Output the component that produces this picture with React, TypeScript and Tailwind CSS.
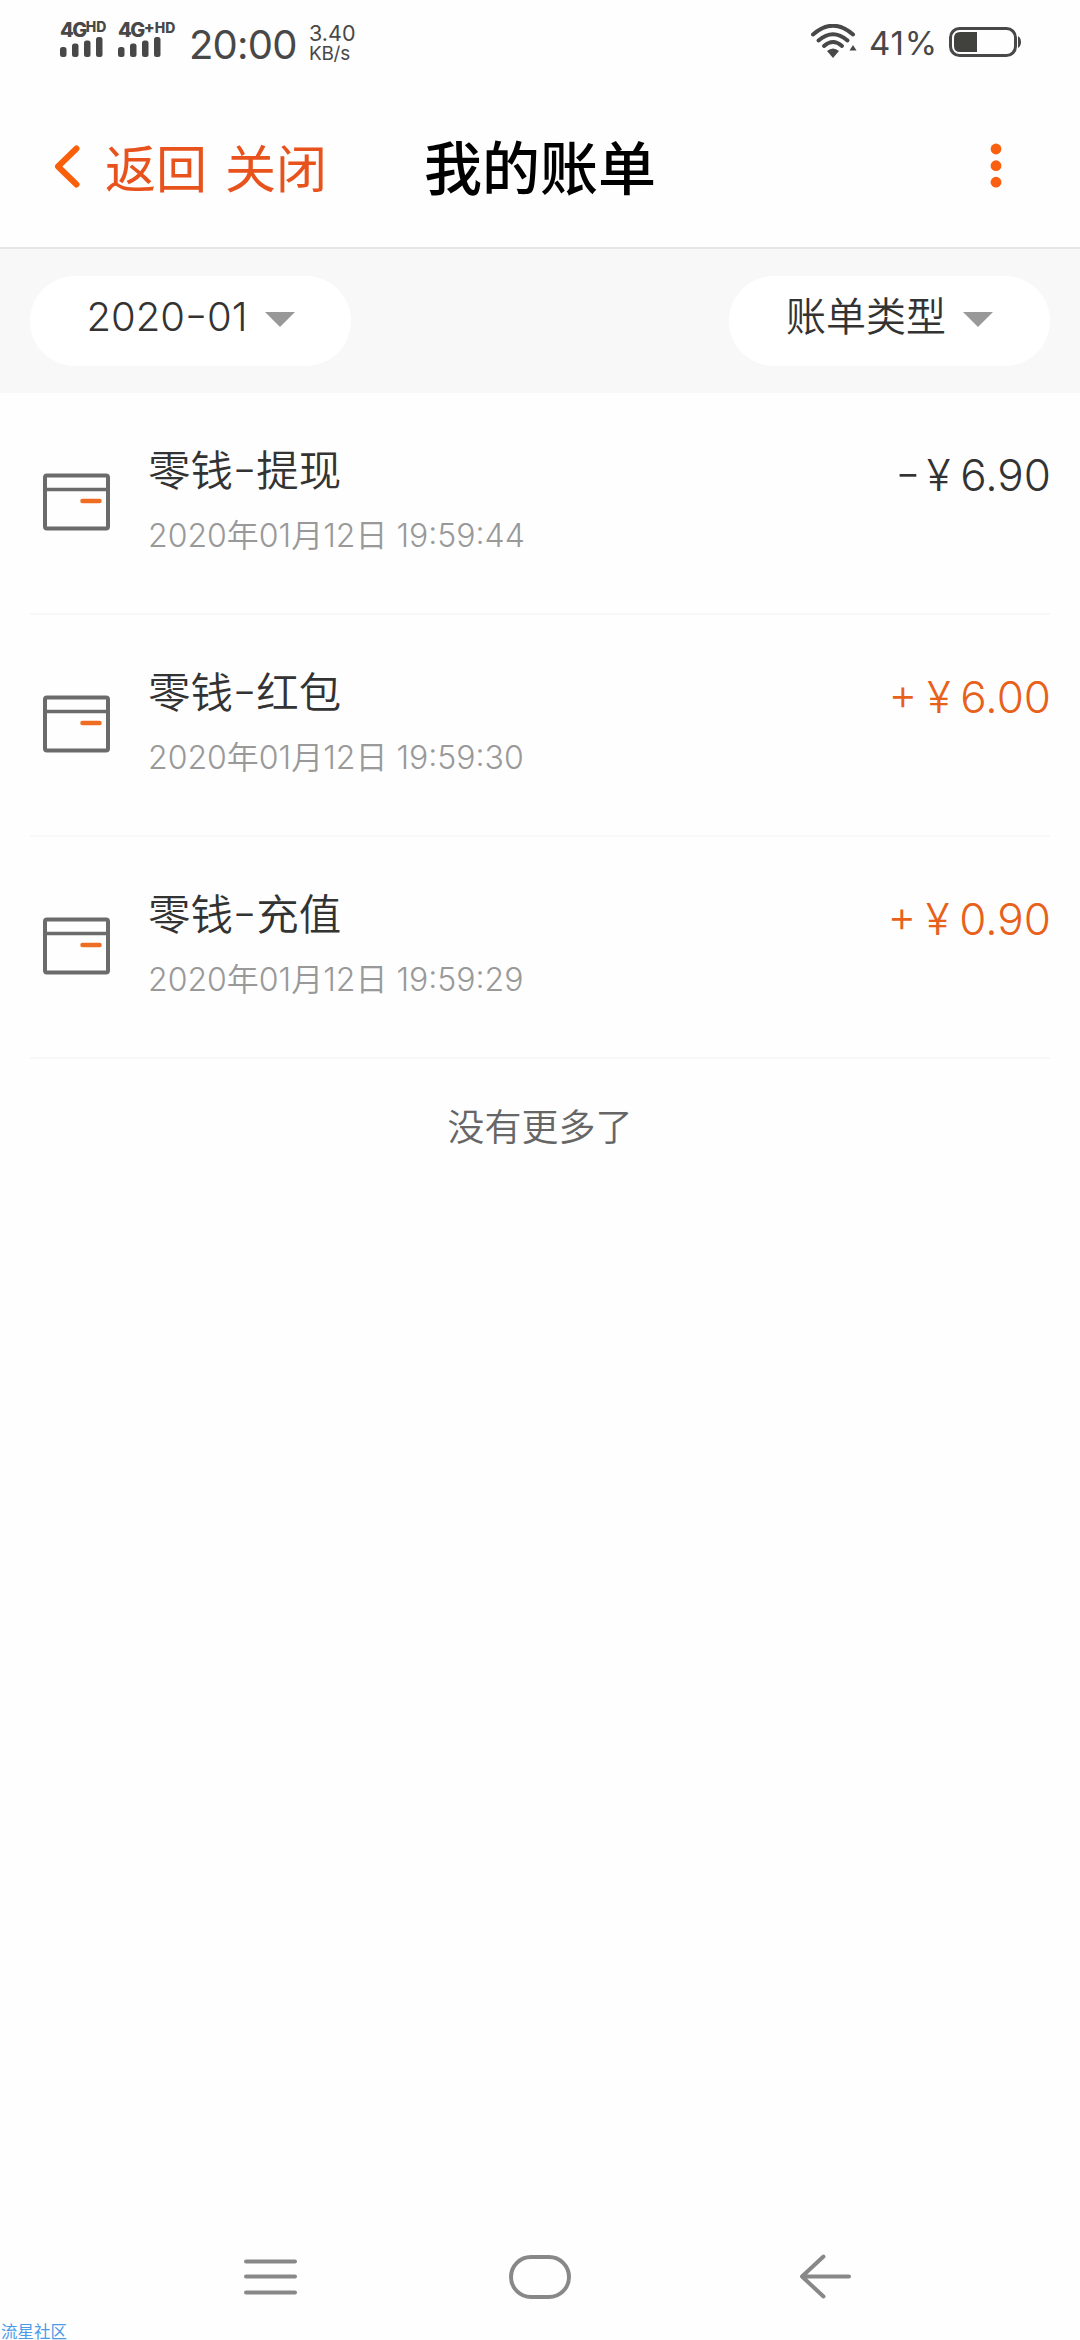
import type { ReactNode } from "react";

interface Bill {
  id: number;
  kind: string;
  time: string;
  amount: string;
  income: boolean;
}

const bills: Bill[] = [
  { id: 1, kind: "提现", time: "2020年01月12日 19:59:44", amount: "6.90", income: false },
  { id: 2, kind: "红包", time: "2020年01月12日 19:59:30", amount: "6.00", income: true },
  { id: 3, kind: "充值", time: "2020年01月12日 19:59:29", amount: "0.90", income: true },
];

const SignalBars = () => (
  <svg width="43" height="20" viewBox="0 0 43 20" fill="#484848" aria-hidden="true">
    <rect x="0" y="10" width="6.5" height="10" rx="2.5" />
    <rect x="12" y="6.5" width="6.5" height="13.5" rx="2.5" />
    <rect x="24" y="3.5" width="6.5" height="16.5" rx="2.5" />
    <rect x="36" y="0" width="6.5" height="20" rx="2.5" />
  </svg>
);

const StatusBar = () => (
  <div className="flex h-[84px] items-start text-[#484848]">
    {/* 双卡信号 */}
    <div className="ml-[60px] mt-[20px] w-[58px]">
      <div className="flex h-[17px] items-start whitespace-nowrap font-extrabold">
        <span className="text-[20px] leading-[21px] tracking-[-1.5px]">4G</span>
        <span className="text-[14px] leading-[14px]">HD</span>
      </div>
      <SignalBars />
    </div>
    <div className="mt-[20px] w-[71px]">
      <div className="flex h-[17px] items-start whitespace-nowrap font-extrabold">
        <span className="text-[20px] leading-[21px] tracking-[-1.5px]">4G</span>
        <span className="text-[14px] leading-[14px]">
          <span className="text-[16px]">+</span>HD
        </span>
      </div>
      <SignalBars />
    </div>
    <div className="mt-[25px] w-[120px] whitespace-nowrap text-[40px] leading-[40px] tracking-[-0.8px]">20:00</div>
    <div className="mt-[23px] flex flex-col whitespace-nowrap">
      <span className="text-[21.5px] leading-[21px]">3.40</span>
      <span className="text-[19px] leading-[19px] tracking-[-0.3px]">KB/s</span>
    </div>

    <div className="ml-auto mr-[59px] flex">
      <svg className="mt-[24px]" width="48" height="36" viewBox="0 0 48 36" fill="none" stroke="#484848" strokeWidth="4" strokeLinecap="round" aria-hidden="true">
        <path d="M2 10.5Q22 -7 42 10.5" />
        <path d="M7.500 16.500Q22 4 36.500 16.500" />
        <path d="M13 22Q22 14 31 22" />
        <path d="M16 27Q22 22 28 27L22 34Z" fill="#484848" stroke="none" />
        <path d="M42 21L45.500 26.500H38.500Z" fill="#484848" stroke="none" />
      </svg>
      <span className="ml-[10px] mt-[26px] w-[80px] whitespace-nowrap text-[33px] leading-[34px] tracking-[0.8px]">41%</span>
      <svg className="mt-[26px]" width="72" height="32" viewBox="0 0 72 32" aria-hidden="true">
        <rect x="1.500" y="2.500" width="65" height="27" rx="9" fill="none" stroke="#484848" strokeWidth="3" />
        <path d="M11 6H28V26H11Q5 26 5 20V12Q5 6 11 6Z" fill="#41413d" />
        <path d="M69 10Q72 12 72 16Q72 20 69 22Z" fill="#484848" />
      </svg>
    </div>
  </div>
);

const NavHeader = () => (
  <header className="grid h-[165px] grid-cols-3 items-start border-b-2 border-[#e6e6e6]">
    <div className="flex pl-[53px]">
      <svg className="mt-[60px]" width="28" height="44" viewBox="0 0 28 44" fill="none" stroke="#fa5f0a" strokeWidth="6" strokeLinecap="round" strokeLinejoin="round" aria-hidden="true">
        <path d="M23.500 4.500L5 22.500L23.500 40.500" />
      </svg>
      <div className="ml-[24px] mt-[51px] flex gap-[18px] whitespace-nowrap text-[51px] leading-[70px] text-[#e8521c]">
        <span>返回</span>
        <span>关闭</span>
      </div>
    </div>
    <h1 className="mt-[47px] whitespace-nowrap text-center text-[58px] font-medium leading-[76px] text-black">我的账单</h1>
    <svg className="mt-[57px] ml-auto mr-[77px]" width="14" height="50" viewBox="0 0 14 50" fill="#fa6010" aria-hidden="true">
      <circle cx="7" cy="8" r="5.400" />
      <circle cx="7" cy="24.700" r="5.400" />
      <circle cx="7" cy="41.200" r="5.400" />
    </svg>
  </header>
);

const Dash = () => <span className="mx-[2px] inline-block -translate-y-[2px] scale-x-125">-</span>;

const FilterButton = ({ children }: { children: ReactNode }) => (
  <button className="flex h-[90px] w-[321px] items-center justify-center gap-[17px] rounded-full bg-white pb-[8px] text-[40px] font-[350] text-[#333]">
    <span className="whitespace-nowrap leading-[50px]">{children}</span>
    <svg className="mt-[5px]" width="30" height="15" viewBox="0 0 30 15" fill="#999" aria-hidden="true">
      <path d="M0 0H30L15 15Z" />
    </svg>
  </button>
);

const WalletIcon = () => (
  <svg className="mt-[79px] shrink-0" width="69" height="60" viewBox="0 0 69 60" fill="none" stroke="#6b6b6b" strokeWidth="4" aria-hidden="true">
    <rect x="3" y="3.500" width="63" height="53" rx="2" />
    <path d="M3 17.500H66" strokeWidth="3.500" />
    <path d="M40.500 29H57.500" stroke="#ee6d22" strokeWidth="4.500" strokeLinecap="round" />
  </svg>
);

const BillRow = ({ kind, time, amount, income }: Bill) => (
  <li className="mx-[30px] flex h-[222px] items-start border-b-2 border-[#f8f8f8] pl-[12px]">
    <WalletIcon />
    <div className="ml-[37px] flex flex-col whitespace-nowrap">
      <span className="mt-[48px] text-[42.5px] font-[350] leading-[60px] text-[#333]">
        零钱
        <Dash />
        {kind}
      </span>
      <span className="mt-[11px] text-[32px] font-[350] leading-[48px] text-[#999]">{time}</span>
    </div>
    <span className={`-mr-px ml-auto mt-[52px] whitespace-nowrap text-[44px] font-light leading-[60px] ${income ? "text-[#e8611a]" : "text-[#333]"}`}>
      {income ? <span className="inline-block -translate-y-[3px]">+</span> : <span className="-mr-[3px]"><Dash /></span>}
      <span className="inline-block w-[43px] text-center">¥</span>
      {amount}
    </span>
  </li>
);

export default function App() {
  return (
    <div className="flex h-[2340px] w-[1080px] flex-col overflow-hidden bg-[#fefefe] [font-family:Inter,'Noto_Sans_CJK_SC',sans-serif]">
      <StatusBar />
      <NavHeader />

      {/* 筛选 */}
      <div className="flex h-[144px] items-center justify-between bg-[#f8f8f8] px-[30px]">
        <FilterButton>
          2020
          <Dash />
          01
        </FilterButton>
        <FilterButton>账单类型</FilterButton>
      </div>

      <ul>
        {bills.map((bill) => (
          <BillRow key={bill.id} {...bill} />
        ))}
      </ul>
      <p className="mt-[39px] text-center text-[37px] font-[350] leading-[60px] text-[#666]">没有更多了</p>

      {/* 系统导航键 */}
      <nav className="mt-auto flex h-[50px] items-center pl-[242px]">
        <svg width="57" height="48" viewBox="0 0 57 48" fill="none" stroke="#888" strokeWidth="4" strokeLinecap="round" aria-hidden="true">
          <path d="M4 8.500H53M4 23.500H53M4 39.500H53" />
        </svg>
        <svg className="ml-[208px]" width="66" height="48" viewBox="0 0 66 48" fill="none" stroke="#888" strokeWidth="4" aria-hidden="true">
          <rect x="4" y="4" width="58" height="40" rx="20" />
        </svg>
        <svg className="ml-[225px]" width="56" height="48" viewBox="0 0 56 48" fill="none" stroke="#888" strokeWidth="4" strokeLinecap="round" strokeLinejoin="round" aria-hidden="true">
          <path d="M51 23.500H4M25.500 3.500L4 23.500L25.500 43.500" />
        </svg>
      </nav>
      <div className="mt-[20px] h-[18px] whitespace-nowrap pl-px text-[16.500px] leading-[20px] text-[#4a9be8]">流星社区</div>
    </div>
  );
}
